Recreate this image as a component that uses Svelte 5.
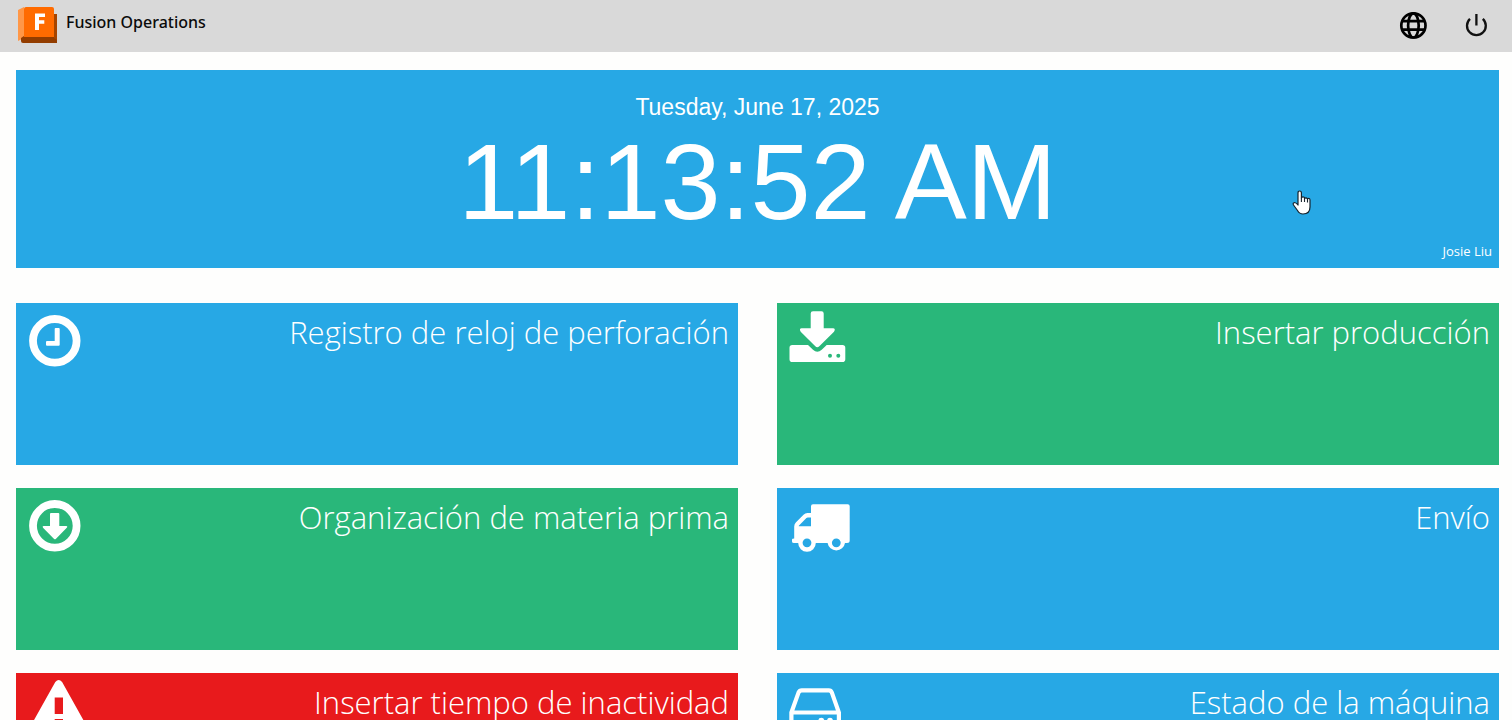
<script>
  const date = 'Tuesday, June 17, 2025';
  const time = '11:13:52 AM';
  const user = 'Josie Liu';
  const tiles = [
    { label: 'Registro de reloj de perforación', icon: 'clock', color: 'blue' },
    { label: 'Insertar producción', icon: 'download', color: 'green' },
    { label: 'Organización de materia prima', icon: 'arrow', color: 'green' },
    { label: 'Envío', icon: 'truck', color: 'blue' },
    { label: 'Insertar tiempo de inactividad', icon: 'warning', color: 'red' },
    { label: 'Estado de la máquina', icon: 'drive', color: 'blue' }
  ];
</script>

<div class="page">
  <header>
    <a class="brand" href="#home">
      <svg class="logo" width="40" height="37" viewBox="0 0 40 37" aria-hidden="true">
        <path d="M0 3 6 0V31L0 34Z" fill="#ff9747" />
        <path d="M3 31 6 29H34L36 7H39V36H5Q3 36 3 34Z" fill="#933d00" />
        <path d="M36 7H39V33L36 31Z" fill="#a64500" />
        <path d="M8 0H34Q36 0 36 2V30H6V2Q6 0 8 0Z" fill="#ff6b00" />
        <path d="M17 6.5H27V10H21V13.3H26.3V16.8H21V23H17Z" fill="#fff" />
      </svg>
      <span>Fusion Operations</span>
    </a>
    <nav>
      <button type="button" aria-label="Language">
        <svg width="28" height="28" viewBox="0 0 28 28" fill="none" stroke="#000" stroke-width="2.7" aria-hidden="true">
          <circle cx="14.4" cy="14.4" r="12.1" />
          <ellipse cx="14.4" cy="14.4" rx="5.3" ry="12.1" />
          <path d="M3 10.1H25.8M3 18.7H25.8" />
        </svg>
      </button>
      <button type="button" aria-label="Log out">
        <svg width="28" height="28" viewBox="0 0 28 28" fill="none" stroke="#111" stroke-width="2.3" aria-hidden="true">
          <path d="M14.4 3V14.4M8 7.8A9.4 9.4 0 1 0 20.8 7.8" />
        </svg>
      </button>
    </nav>
  </header>

  <main>
    <section class="clock">
      <p class="date">{date}</p>
      <p class="time">{time}</p>
      <p class="user">{user}</p>
      <svg class="pointer" width="20" height="26" viewBox="0 0 20 26" aria-hidden="true">
        <path
          d="M6 14V3Q6 1 7.7 1T9.4 3V8Q10 6.5 11.5 7T12.5 8.5Q14 7 15.5 8.8Q17.8 7.5 18 10V17Q18 24 11 24Q7.5 24 5.5 20.5L1.5 15Q.5 12.8 2.5 12.5Q4 12.5 6 15Z"
          fill="#fff" stroke="#16232d" stroke-width="1.2" stroke-linejoin="round" />
        <path d="M9.4 8V12M12.5 8.5V12M15.5 9V12.5" stroke="#16232d" stroke-width="1.1" />
      </svg>
    </section>

    <div class="tiles">
      {#each tiles as tile}
        <button type="button" class="tile {tile.color}">
          <svg width="80" height="64" viewBox="0 0 80 64" fill="#fff" aria-hidden="true">
            {#if tile.icon === 'clock'}
              <circle cx="38.8" cy="37.8" r="21.8" fill="none" stroke="#fff" stroke-width="7.8" />
              <path d="M39.6 25H42.8Q43.7 25 43.7 26V41.7Q43.7 42.7 42.7 42.7H31Q30 42.7 30 41.7V39Q30 38 31 38H38.7V26Q38.7 25 39.6 25Z" />
            {:else if tile.icon === 'arrow'}
              <circle cx="38.8" cy="37.8" r="21.8" fill="none" stroke="#fff" stroke-width="7.8" />
              <path d="M35 25H42.3Q43.3 25 43.3 26V38H50.3Q52 38.1 51 39.6L39.8 50.9Q39 51.6 38.1 50.9L27 39.7Q26 38.2 27.5 38H34V26Q34 25 35 25Z" />
            {:else if tile.icon === 'download'}
              <path d="M36 8.3H44.5Q46.7 8.3 46.7 10.5V25.3H56Q59 25.7 57 28.7L42.3 43.3Q40.3 45.1 38.3 43.3L23.7 28.7Q21.7 25.7 24.7 25.3H33.7V10.5Q33.7 8.3 36 8.3Z" />
              <path fill-rule="evenodd" d="M15.2 42H31L36 46.7Q40.3 51 44.7 46.7L49.7 42H65.4Q68.3 42 68.3 44.8V56.2Q68.3 59 65.4 59H15.2Q12.5 59 12.5 56.2V44.8Q12.5 42 15.2 42ZM53 50.7A2 2 0 1 0 53 54.7A2 2 0 1 0 53 50.7ZM61.3 50.7A2 2 0 1 0 61.3 54.7A2 2 0 1 0 61.3 50.7Z" />
            {:else if tile.icon === 'truck'}
              <path fill-rule="evenodd" d="M36 16.3H70.7Q72.7 16.3 72.7 18.3V52.5Q72.7 55 70 55H68A8.8 8.8 0 0 1 50.6 55H38.8A8.8 8.8 0 0 1 21.2 55H17Q15 55 15 53.5V51.5Q15 50.5 17.2 50.5V38.5Q17.2 36 19 34.2L26.5 26.7Q28.2 25 30.5 25H34V18.3Q34 16.3 36 16.3ZM34 29.5H30.7Q30 29.5 29.4 30.1L21.8 37.7V38.3H34ZM30 50.4A4.4 4.4 0 1 0 30 59.2A4.4 4.4 0 1 0 30 50.4ZM59.3 50.4A4.4 4.4 0 1 0 59.3 59.2A4.4 4.4 0 1 0 59.3 50.4Z" />
            {:else if tile.icon === 'warning'}
              <path fill-rule="evenodd" d="M39.3 9Q42.7 5 46.1 9L72 55.3Q74.3 61.3 68.5 62H17Q11.2 61.3 13.4 55.3ZM38.7 24.5V41H47V24.5ZM38.7 46V54H47V46Z" />
            {:else}
              <path d="M14.4 39.5L21.6 19.4Q22.5 17.3 24.8 17.3H51.8Q54 17.3 54.8 19.4L61.9 39.5V55Q61.9 59 57.9 59H18.4Q14.4 59 14.4 55ZM14.4 39.5H61.9" fill="none" stroke="#fff" stroke-width="4.2" />
              <circle cx="44.3" cy="47.8" r="3" />
              <circle cx="53" cy="47.8" r="3" />
            {/if}
          </svg>
          <span>{tile.label}</span>
        </button>
      {/each}
    </div>
  </main>
</div>

<style>
  :global(body) {
    margin: 0;
    background: #fefefd;
  }
  .page {
    display: flex;
    flex-direction: column;
    height: 100vh;
    font-family: 'Open Sans', sans-serif;
  }
  header {
    display: flex;
    flex: none;
    justify-content: space-between;
    align-items: flex-start;
    box-sizing: border-box;
    height: 52px;
    padding: 7px 22px 0 18px;
    background: #d9d9d9;
  }
  .brand {
    display: flex;
    gap: 8px;
    color: #0b0b0b;
    font: 500 16px/30px 'Noto Sans', sans-serif;
    text-decoration: none;
  }
  nav {
    display: flex;
    gap: 35px;
    padding-top: 4px;
  }
  nav button {
    display: flex;
    padding: 0;
    border: 0;
    background: none;
    cursor: pointer;
  }
  main {
    flex: 1;
    min-height: 0;
    padding: 18px 13px 0 16px;
    overflow-y: auto;
    scrollbar-width: none;
  }
  .clock {
    position: relative;
    box-sizing: border-box;
    padding: 22px 7px 7px;
    background: #27a8e5;
    color: #fff;
    text-align: center;
  }
  .clock p {
    margin: 0;
  }
  .date {
    font: 23px/30px 'Liberation Sans', Arial, sans-serif;
  }
  .time {
    font: 108px/119px 'Liberation Sans', Arial, sans-serif;
  }
  .clock .user {
    font-size: 13px;
    line-height: 20px;
    text-align: right;
  }
  .pointer {
    position: absolute;
    top: 120px;
    right: 187px;
  }
  .tiles {
    display: grid;
    grid-template-columns: 1fr 1fr;
    gap: 23px 39px;
    margin-top: 35px;
    padding-bottom: 23px;
  }
  .tile {
    display: flex;
    justify-content: space-between;
    align-items: flex-start;
    min-height: 162px;
    padding: 0 9px 0 0;
    border: 0;
    color: #fff;
    font: 300 31px/44px 'Open Sans', sans-serif;
    text-align: right;
    cursor: pointer;
  }
  .tile svg {
    flex: none;
  }
  .tile span {
    padding-top: 7px;
  }
  .blue {
    background: #27a8e5;
  }
  .green {
    background: #29b77a;
  }
  .red {
    background: #e81a1c;
  }
</style>
